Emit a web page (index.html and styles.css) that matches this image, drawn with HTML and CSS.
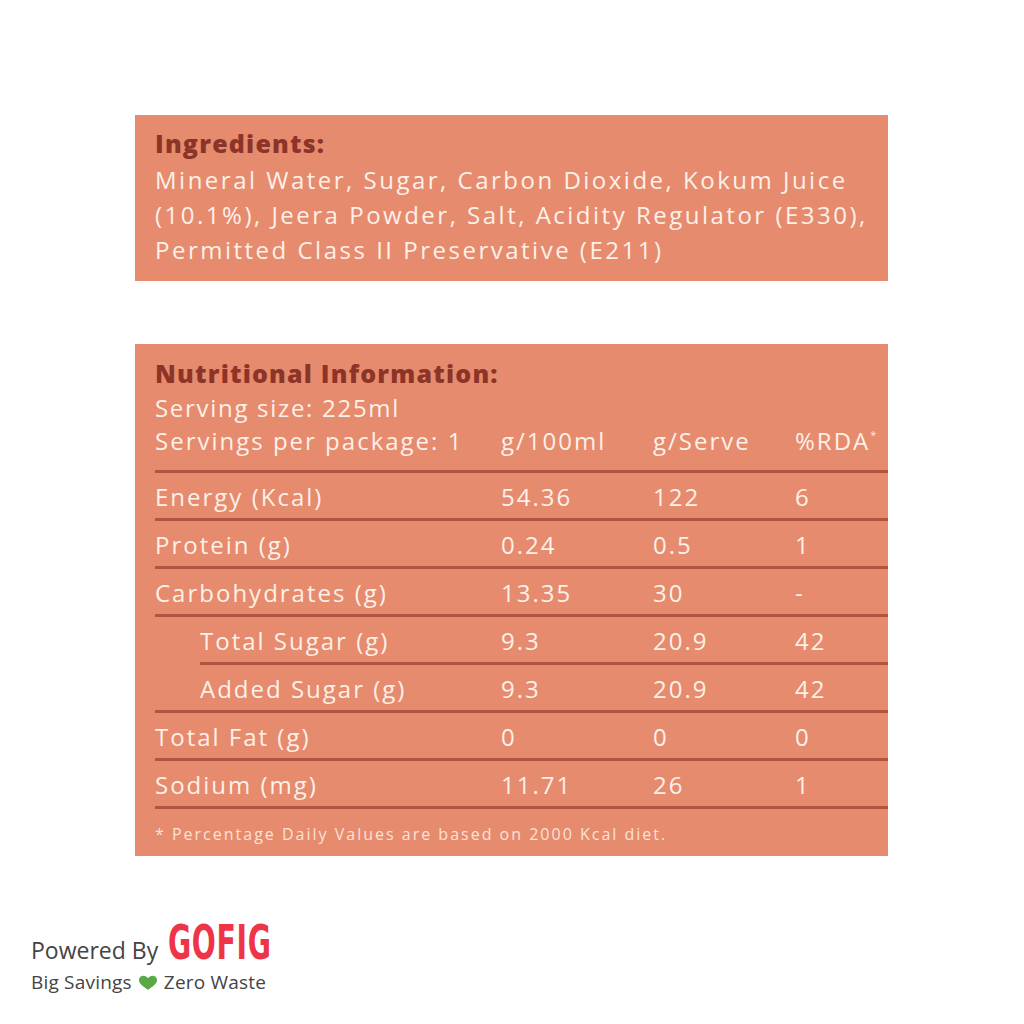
FILE: index.html
```html
<!DOCTYPE html>
<html lang="en">
<head>
<meta charset="utf-8">
<title>Nutrition Label</title>
<link rel="stylesheet" href="styles.css">
</head>
<body>
<main class="page">
  <section class="card ingredients">
    <h2 class="card-title">Ingredients:</h2>
    <p class="ing-text">Mineral Water, Sugar, Carbon Dioxide, Kokum Juice<br>(10.1%), Jeera Powder, Salt, Acidity Regulator (E330),<br>Permitted Class II Preservative (E211)</p>
  </section>

  <section class="card nutrition">
    <h2 class="card-title">Nutritional Information:</h2>
    <p class="serving">Serving size: 225ml</p>
    <div class="row head">
      <span>Servings per package: 1</span><span>g/100ml</span><span>g/Serve</span><span>%RDA<sup>*</sup></span>
    </div>
    <div class="row"><span>Energy (Kcal)</span><span>54.36</span><span>122</span><span>6</span></div>
    <div class="row"><span>Protein (g)</span><span>0.24</span><span>0.5</span><span>1</span></div>
    <div class="row"><span>Carbohydrates (g)</span><span>13.35</span><span>30</span><span>-</span></div>
    <div class="row sub-first"><span>Total Sugar (g)</span><span>9.3</span><span>20.9</span><span>42</span></div>
    <div class="row sub-last"><span class="indent">Added Sugar (g)</span><span>9.3</span><span>20.9</span><span>42</span></div>
    <div class="row"><span>Total Fat (g)</span><span>0</span><span>0</span><span>0</span></div>
    <div class="row"><span>Sodium (mg)</span><span>11.71</span><span>26</span><span>1</span></div>
    <p class="footnote">* Percentage Daily Values are based on 2000 Kcal diet.</p>
  </section>

  <footer class="brand">
    <div class="brand-top">
      <span class="powered">Powered By</span>
      <span class="logo">GOFIG</span>
    </div>
    <div class="tagline">
      Big Savings
      <svg class="heart" viewBox="0 0 26 20" width="20" height="15" aria-hidden="true"><path d="M13 19.5 C5.5 14.5 1 11 1 6.5 C1 3.2 3.6 1 6.8 1 C9.4 1 11.6 2.4 13 4.4 C14.4 2.4 16.6 1 19.2 1 C22.4 1 25 3.2 25 6.5 C25 11 20.5 14.5 13 19.5 Z" fill="#5aa846"/></svg>
      Zero Waste
    </div>
  </footer>
</main>
</body>
</html>
```

FILE: styles.css
```css
html, body {
  margin: 0;
  padding: 0;
  background: #ffffff;
}

.page {
  width: 1024px;
  height: 1024px;
  box-sizing: border-box;
  padding-top: 115px;
  font-family: "Open Sans", "Lato", sans-serif;
}

.card {
  margin-left: 135px;
  width: 753px;
  background: #e68b6d;
  box-sizing: border-box;
  padding-left: 20px;
  color: #fdf0e8;
}

.card-title {
  margin: 0;
  font-size: 25px;
  font-weight: 800;
  color: #8c3427;
  line-height: 32px;
  letter-spacing: 1.2px;
}

.ingredients {
  height: 166px;
  padding-top: 12px;
}

.ing-text {
  margin: 3px 0 0;
  font-size: 24px;
  line-height: 35px;
  letter-spacing: 2.5px;
}

.nutrition {
  margin-top: 63px;
  height: 512px;
  padding-top: 13px;
}

.serving {
  margin: 2px 0 0;
  font-size: 24px;
  line-height: 34px;
  letter-spacing: 1.7px;
}

.row {
  display: grid;
  grid-template-columns: 346px 152px 142px 1fr;
  font-size: 24px;
  letter-spacing: 2px;
  height: 48px;
  box-sizing: border-box;
  padding-top: 9px;
  line-height: 30px;
  border-bottom: 3px solid #b5543e;
}

.row.head {
  height: 48px;
  padding-top: 0;
  line-height: 32px;
}

.row.sub-first {
  margin-left: 45px;
  grid-template-columns: 301px 152px 142px 1fr;
}

.indent {
  padding-left: 45px;
}

sup {
  font-size: 11px;
  vertical-align: 11px;
  line-height: 0;
}

.footnote {
  margin: 13px 0 0;
  font-size: 16px;
  letter-spacing: 2px;
  line-height: 24px;
  color: #fbe2d6;
}

.brand {
  margin-top: 66px;
  margin-left: 31px;
  color: #444444;
}

.brand-top {
  display: flex;
  align-items: baseline;
  gap: 10px;
  height: 40px;
}

.powered {
  font-size: 23px;
  line-height: 28px;
}

.logo {
  font-family: "DejaVu Sans Condensed", "DejaVu Sans", sans-serif;
  font-stretch: condensed;
  font-weight: 700;
  font-size: 48px;
  line-height: 40px;
  color: #ee3548;
  display: inline-block;
  transform: scaleX(0.655);
  transform-origin: left center;
  letter-spacing: 1px;
}

.tagline {
  display: flex;
  align-items: center;
  gap: 6px;
  margin-top: 8px;
  font-size: 19px;
  line-height: 24px;
  letter-spacing: 0.2px;
}

.heart {
  display: block;
}
```
